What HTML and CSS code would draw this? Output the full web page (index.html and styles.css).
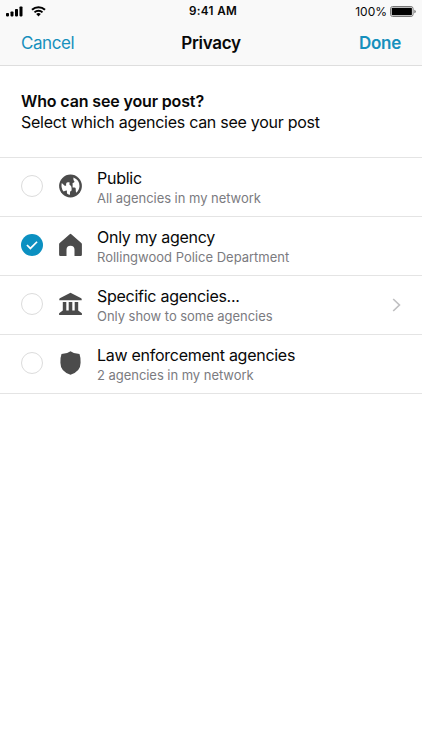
FILE: index.html
```html
<!DOCTYPE html>
<html lang="en">
<head>
<meta charset="utf-8">
<title>Privacy</title>
<link rel="stylesheet" href="styles.css">
</head>
<body>
<header class="top">
  <div class="status">
    <div class="signals">
      <svg class="cell" width="17" height="11" viewBox="0 0 17 11"><rect x="0" y="7" width="3" height="3.4" rx=".8"/><rect x="4.5" y="5.4" width="3" height="5" rx=".8"/><rect x="9" y="3" width="3" height="7.4" rx=".8"/><rect x="13.5" y="0.4" width="3" height="10" rx=".8"/></svg>
      <svg class="wifi" width="15" height="11" viewBox="0 0 15 11"><path d="M1 3.8a9.3 9.3 0 0 1 13 0M3.5 6.4a5.8 5.8 0 0 1 8 0" fill="none" stroke="#000" stroke-width="2"/><path d="M5.2 8.1a3.3 3.3 0 0 1 4.6 0L7.5 10.4z"/></svg>
    </div>
    <div class="time">9:41 AM</div>
    <div class="power"><span>100%</span>
      <svg width="26" height="11" viewBox="0 0 26 11"><rect x=".5" y=".5" width="22.6" height="10" rx="2.2" fill="none" stroke="#777"/><rect x="1.7" y="1.7" width="20.2" height="7.6" rx=".8"/><path d="M24.3 3.7q1.5 .4 1.5 1.8t-1.5 1.8z" fill="#777"/></svg>
    </div>
  </div>
  <nav class="nav">
    <a class="cancel">Cancel</a>
    <h1 class="title">Privacy</h1>
    <a class="done">Done</a>
  </nav>
</header>
<section class="intro">
  <h2 class="question">Who can see your post?</h2>
  <p class="hint">Select which agencies can see your post</p>
</section>
<ul class="options">
  <li class="option">
    <span class="radio"></span>
    <svg class="icon" width="24" height="24" viewBox=".5 0 24 24"><circle cx="12" cy="12" r="11.4"/><path fill="#fff" d="M3.3 9L6.2 11.7H7.6V9.9Q7.6 8.2 9.3 8.2H11V10.8Q13.1 11.6 13.1 14V16.6Q11.5 17 11.5 18.4V20.8Q8.4 20.4 8.4 18.4V16.6Q7 16.6 5.1 17.6Q2 13.7 3.3 9zM14.9 3.5Q21 5.8 21 12Q20.8 16.2 17.6 18.8Q17.2 17.2 17.2 14.6Q17 13.5 15.9 13.5H14.1V8.9Q16 8.6 16 7.4Q14.5 6.3 14.9 3.5z"/></svg>
    <div class="label"><div class="name">Public</div><div class="detail tight">All agencies in my network</div></div>
  </li>
  <li class="option">
    <span class="radio checked"><svg width="22" height="22" viewBox="0 0 23 23"><path d="M6.2 11.5L9.8 15.1L16.8 8.1" fill="none" stroke="#fff" stroke-width="1.8"/></svg></span>
    <svg class="icon" width="24" height="24" viewBox=".5 0 24 24"><path d="M12 .8Q12.4.8 12.8 1.2L22.8 9.9Q23.4 10.4 23.4 11.2V21.8Q23.4 23 22.2 23H16V16.8Q16 12.8 12 12.8T8 16.8V23H1.8Q.6 23 .6 21.8V11.2Q.6 10.4 1.2 9.9L11.2 1.2Q11.6.8 12 .8z"/></svg>
    <div class="label"><div class="name">Only my agency</div><div class="detail">Rollingwood Police Department</div></div>
  </li>
  <li class="option">
    <span class="radio"></span>
    <svg class="icon" width="24" height="24" viewBox=".5 0 24 24"><path d="M12 .8L22.7 6.3Q23.2 6.6 23.2 7.2V8.2H.8V7.2Q.8 6.6 1.3 6.3zM4.3 10H7.8V18.4H10.2V10H13.8V18.4H16.2V10H19.7V18.4L23.4 21.2V23H.6V21.2L4.3 18.4z"/></svg>
    <div class="label"><div class="name">Specific agencies...</div><div class="detail tight">Only show to some agencies</div></div>
    <svg class="chevron" width="9" height="14" viewBox="0 0 9 14"><path d="M1.2 1L7.4 7L1.2 13" fill="none" stroke="#c0c0c2" stroke-width="1.7"/></svg>
  </li>
  <li class="option">
    <span class="radio"></span>
    <svg class="icon" width="24" height="24" viewBox=".5 0 24 24"><path d="M12 .2Q15.6 3 21 3.1Q22.2 6.2 22.1 11.8Q22.1 20.7 12 23.7Q1.9 20.7 1.9 11.8Q1.8 6.2 3 3.1Q8.4 3 12 .2z"/></svg>
    <div class="label"><div class="name">Law enforcement agencies</div><div class="detail tight">2 agencies in my network</div></div>
  </li>
</ul>
</body>
</html>
```
FILE: styles.css
```css
* { box-sizing: border-box; margin: 0; padding: 0; }
body { background: #fff; color: #080808; font-family: Inter, sans-serif; font-size: 16px; }
.top { height: 66px; background: #f9f9f9; border-bottom: 1px solid #dedede; }
.status { height: 22px; padding: 0 6px; display: grid; grid-template-columns: 1fr auto 1fr; align-items: center; font-size: 12px; }
.signals { display: flex; gap: 8px; }
.time { font-weight: 600; font-size: 11.7px; letter-spacing: .35px; padding-left: 4px; }
.power { display: flex; justify-content: flex-end; align-items: center; gap: 3px; }
.nav { height: 42px; padding: 0 21px; display: grid; grid-template-columns: 1fr auto 1fr; align-items: center; }
.cancel, .done { color: #1690bd; font-size: 17px; }
.cancel { letter-spacing: -.45px; }
.title { font-size: 17px; font-weight: 600; letter-spacing: -.3px; }
.done { font-weight: 600; text-align: right; letter-spacing: -.25px; }
.intro { height: 92px; padding: 24px 21px 0; line-height: 22px; margin-bottom: -1px; }
.question { font-size: 16px; font-weight: 600; line-height: 22px; letter-spacing: -.14px; }
.hint { line-height: 20px; letter-spacing: -.27px; }
.options { list-style: none; border-top: 1px solid #e4e4e4; }
.option { height: 59px; border-bottom: 1px solid #e4e4e4; padding: 0 21px; display: flex; align-items: center; }
.radio { width: 22px; height: 22px; border: 1px solid #dcdcdc; border-radius: 50%; flex: none; margin-bottom: 2px; }
.checked { border: 0; background: #0b90c1; }
.checked svg { display: block; }
.icon { margin: 0 0 2px 16px; fill: #4b4b4b; flex: none; }
.label { margin-left: 14px; flex: 1; white-space: nowrap; }
.name { font-size: 16px; line-height: 20px; letter-spacing: -.27px; }
.detail { font-size: 13px; line-height: 18px; color: #7b7b7f; padding-top: 1px; margin-bottom: -1px; }
.tight { letter-spacing: -.04px; }
.chevron { flex: none; margin-bottom: 1px; }
```
